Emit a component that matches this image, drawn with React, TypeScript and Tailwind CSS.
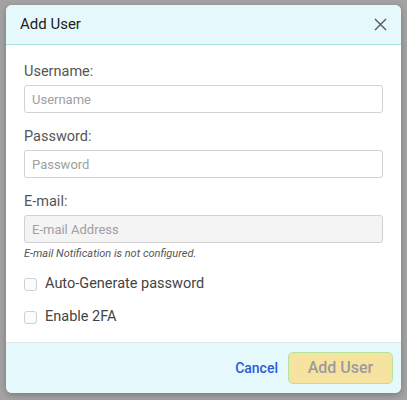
import React from 'react';

function Field({ label, placeholder, disabled }: { label: string; placeholder: string; disabled?: boolean }) {
  return (
    <div className="flex flex-col">
      <label className="text-[14.5px] leading-[20px] text-[#555]">{label}</label>
      <input
        disabled={disabled}
        placeholder={placeholder}
        className={
          'mt-[3px] h-[28px] w-full rounded-[3px] border border-[#d2d2d2] px-[7px] text-[13px] outline-none placeholder:text-[#a0a0a0] ' +
          (disabled ? 'bg-[#f4f4f4]' : 'bg-white')
        }
      />
    </div>
  );
}

function Check({ label }: { label: string }) {
  return (
    <label className="flex items-center gap-[8px] text-[14.5px] leading-[20px] text-[#444]">
      <span className="h-[13px] w-[13px] rounded-[3px] border border-[#d0d0d0] bg-[#fdfcfd]" />
      {label}
    </label>
  );
}

export default function App() {
  return (
    <div className="h-[400px] w-[407px] overflow-hidden bg-[#a3a3a3] pl-[6px] pt-[5px]" style={{ fontFamily: 'Roboto, "Liberation Sans", sans-serif' }}>
      <div className="flex h-[388px] w-[395px] flex-col overflow-hidden rounded-[6px] bg-white shadow-[0_2px_6px_rgba(0,0,0,0.25)]">
        <div className="flex h-[40px] shrink-0 items-center justify-between border-b border-[#a9e2e4] bg-[#e5f9fc] pl-[14px] pr-[14px]">
          <span className="text-[15px] text-[#222]">Add User</span>
          <svg width="13" height="13" viewBox="0 0 13 13" className="text-[#555]">
            <path d="M1 1L12 12M12 1L1 12" stroke="currentColor" strokeWidth="1.4" />
          </svg>
        </div>
        <div className="flex flex-1 flex-col px-[18px] pt-[17px]">
          <div className="flex flex-col gap-[14px]">
            <Field label="Username:" placeholder="Username" />
            <Field label="Password:" placeholder="Password" />
            <div>
              <Field label="E-mail:" placeholder="E-mail Address" disabled />
              <p className="mt-[4px] text-[11px] italic leading-[14px] text-[#555]">E-mail Notification is not configured.</p>
            </div>
          </div>
          <div className="mt-[13px] flex flex-col gap-[13px]">
            <Check label="Auto-Generate password" />
            <Check label="Enable 2FA" />
          </div>
        </div>
        <div className="flex h-[51px] shrink-0 items-center justify-end gap-[10px] border-t border-[#dfe9ea] bg-[#e5f9fc] pr-[8px]">
          <button className="text-[14px] font-medium text-[#2b5bd6]">Cancel</button>
          <button className="h-[32px] w-[105px] rounded-[5px] border border-[#b5e39c] bg-[#f7e3a0] text-[16px] font-medium text-[#9b9b9b]">
            Add User
          </button>
        </div>
      </div>
    </div>
  );
}
